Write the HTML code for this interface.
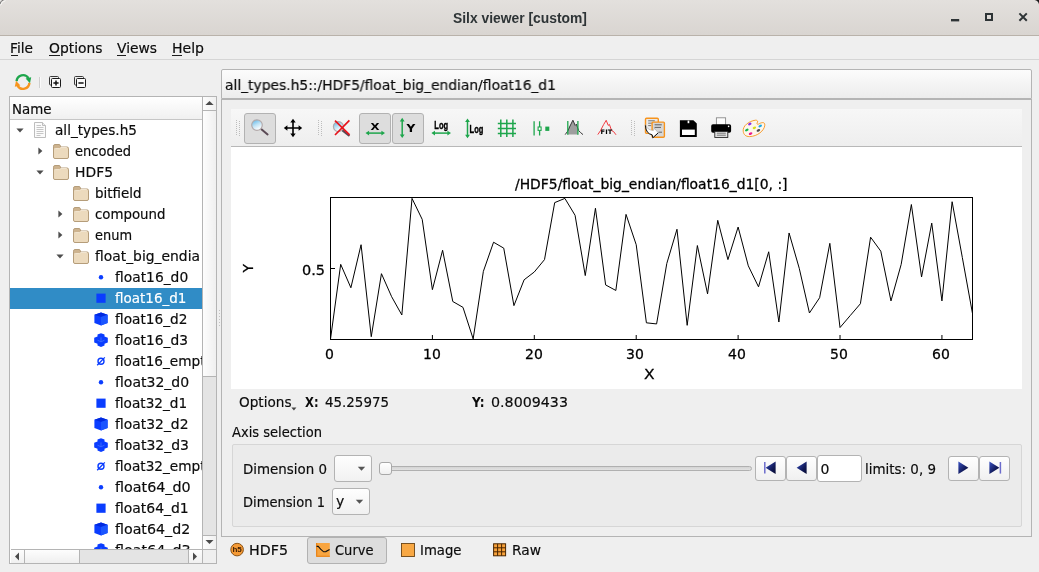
<!DOCTYPE html>
<html lang="en"><head><meta charset="utf-8"><title>Silx viewer [custom]</title>
<style>
html,body{margin:0;padding:0;}
body{width:1039px;height:572px;overflow:hidden;background:#efefef;position:relative;font-family:"DejaVu Sans", "Liberation Sans", sans-serif;font-size:14px;color:#0c0c0c;}
#app{position:absolute;left:0;top:0;width:1039px;height:572px;overflow:hidden;will-change:transform;}
#app div,#app svg{position:absolute;box-sizing:border-box;}
.t{position:absolute;white-space:pre;line-height:20px;transform-origin:0 50%;-webkit-text-stroke:0.18px currentColor;}
</style></head>
<body><div id="app">
<div style="left:0px;top:0px;width:1039px;height:36px;background:linear-gradient(#e3e0dd,#d9d5d1);border-bottom:1px solid #b9b2aa;"></div>
<svg style="left:0;top:0" width="1039" height="8" viewBox="0 0 1039 8"><path d="M1039 0V4.2Q1038.4 0.8 1034.6 0Z" fill="#1a1a1a"/><path d="M0 0H2.4Q0.4 0.4 0 2.6Z" fill="#e9e8e6"/><path d="M0 4Q0.4 0.6 3.6 0" fill="none" stroke="#777" stroke-width="1"/><path d="M0.6 5.4Q1.4 1.6 5.6 0.6" fill="none" stroke="#f6f5f4" stroke-width="1"/></svg>
<span class="t" style="left:453px;top:7.88px;font-size:14.5px;font-weight:bold;-webkit-text-stroke:0;font-family:&quot;Liberation Sans&quot;, &quot;DejaVu Sans&quot;, sans-serif;color:#2e3436;transform:scaleX(0.9556);">Silx viewer [custom]</span>
<svg style="left:945px;top:5px" width="90" height="26" viewBox="945 5 90 26"><g fill="none" stroke="#2e3436" stroke-width="2"><path d="M951 20.2h8.2" stroke-width="2.4"/><rect x="986" y="14" width="6" height="6"/><path d="M1019.4 13.4l7.4 7.4M1026.8 13.4l-7.4 7.4"/></g></svg>
<div style="left:0px;top:59px;width:1039px;height:1px;background:#d5d5d5;"></div>
<span class="t" style="left:10px;top:38.16px;font-size:14px;transform:scaleX(0.9813);">File</span>
<div style="left:10.5px;top:55px;width:7px;height:1px;background:#1c1c1c;"></div>
<span class="t" style="left:48.5px;top:38.16px;font-size:14px;transform:scaleX(0.9902);">Options</span>
<div style="left:49.0px;top:55px;width:11px;height:1px;background:#1c1c1c;"></div>
<span class="t" style="left:116.5px;top:38.16px;font-size:14px;transform:scaleX(0.9869);">Views</span>
<div style="left:117.0px;top:55px;width:9px;height:1px;background:#1c1c1c;"></div>
<span class="t" style="left:171.5px;top:38.16px;font-size:14px;transform:scaleX(1.0024);">Help</span>
<div style="left:172.0px;top:55px;width:10px;height:1px;background:#1c1c1c;"></div>
<svg style="left:14px;top:73px" width="18" height="18" viewBox="0 0 18 18"><path d="M2.6 8.2A6.4 6.4 0 0 1 14.4 5.2" fill="none" stroke="#1ea64c" stroke-width="2.4"/><path d="M11.6 5.6L17.2 4.2L16 10.2Z" fill="#1ea64c"/><path d="M15.4 9.8A6.4 6.4 0 0 1 3.6 12.8" fill="none" stroke="#f7941d" stroke-width="2.4"/><path d="M6.4 12.4L0.8 13.8L2 7.8Z" fill="#f7941d"/></svg>
<div style="left:39px;top:77px;width:1px;height:11px;background:#cfcfcf;"></div>
<div style="left:40px;top:77px;width:1px;height:11px;background:#fafafa;"></div>
<svg style="left:47px;top:74px" width="16" height="16" viewBox="0 0 16 16"><rect x="2.5" y="2.5" width="9" height="8.5" rx="1" fill="none" stroke="#3a3a3a" stroke-width="1"/><rect x="4.5" y="4.5" width="9" height="9" rx="1" fill="#fafafa" stroke="#1a1a1a" stroke-width="1"/><path d="M6.4 9h5.2" stroke="#111" stroke-width="1.5"/><path d="M9 6.4v5.2" stroke="#111" stroke-width="1.5"/></svg>
<svg style="left:72px;top:74px" width="16" height="16" viewBox="0 0 16 16"><rect x="2.5" y="2.5" width="9" height="8.5" rx="1" fill="none" stroke="#3a3a3a" stroke-width="1"/><rect x="4.5" y="4.5" width="9" height="9" rx="1" fill="#fafafa" stroke="#1a1a1a" stroke-width="1"/><path d="M6.4 9h5.2" stroke="#111" stroke-width="1.5"/></svg>
<div style="left:9px;top:96px;width:208px;height:468px;background:#fff;border:1px solid #b4b4b4;"></div>
<div style="left:10px;top:97px;width:193px;height:23px;background:linear-gradient(#ffffff,#f0f0f0);border-bottom:1px solid #c6c6c6;border-right:1px solid #c6c6c6;"></div>
<span class="t" style="left:11.5px;top:99.16px;font-size:14px;transform:scaleX(0.9561);">Name</span>
<div style="left:10px;top:288px;width:192px;height:21px;background:#308cc6;"></div>
<div style="left:11px;top:120px;width:191px;height:429px;overflow:hidden;">
<svg style="left:3.5px;top:5.0px" width="10" height="10" viewBox="-5 -5 10 10"><path d="M-3.6 -1.6h7.2L0 2.4z" fill="#4d4d4d"/></svg>
<svg style="left:22px;top:2px" width="16" height="16" viewBox="0 0 16 16"><path d="M1.5 0.5h8l3 3v12h-11z" fill="#fbfbfb" stroke="#bdbdbd" stroke-width="1"/><path d="M9.5 0.5v3h3" fill="#eee" stroke="#bdbdbd" stroke-width="1"/><path d="M3.5 3.5h4.5M3.5 5.5h7M3.5 7.5h7M3.5 9.5h7M3.5 11.5h7M3.5 13.5h4" stroke="#c6c6c6" stroke-width="1"/></svg>
<span class="t" style="left:43.5px;top:-0.44px;font-size:14px;transform:scaleX(0.9742);">all_types.h5</span>
<svg style="left:23.5px;top:26.0px" width="10" height="10" viewBox="-5 -5 10 10"><path d="M-1.6 -3.6v7.2L2.4 0z" fill="#4d4d4d"/></svg>
<svg style="left:42px;top:24px" width="16" height="16" viewBox="0 0 16 16"><path d="M0.5 2.2 Q0.5 0.5 2 0.5 L6 0.5 Q7 0.5 7.3 1.6 L7.7 3 L14 3 Q15.5 3 15.5 4.5 L15.5 13 Q15.5 14.5 14 14.5 L2 14.5 Q0.5 14.5 0.5 13 Z" fill="#cdb38f" stroke="#b59d7a" stroke-width="1"/><path d="M1 5.8 Q1 4.6 2.4 4.6 L6.6 4.6 L8 3.5 L13.6 3.5 Q15 3.5 15 4.9 L15 12.8 Q15 14 13.6 14 L2.4 14 Q1 14 1 12.8 Z" fill="#ecdabd"/><path d="M1.2 5.1 Q1.4 4.6 2.4 4.6 L6.6 4.6 L8 3.5 L13.8 3.5" stroke="#f7eddc" stroke-width="0.8" fill="none"/></svg>
<span class="t" style="left:63.5px;top:20.56px;font-size:14px;transform:scaleX(0.9312);">encoded</span>
<svg style="left:23.5px;top:47.0px" width="10" height="10" viewBox="-5 -5 10 10"><path d="M-3.6 -1.6h7.2L0 2.4z" fill="#4d4d4d"/></svg>
<svg style="left:42px;top:45px" width="16" height="16" viewBox="0 0 16 16"><path d="M0.5 2.2 Q0.5 0.5 2 0.5 L6 0.5 Q7 0.5 7.3 1.6 L7.7 3 L14 3 Q15.5 3 15.5 4.5 L15.5 13 Q15.5 14.5 14 14.5 L2 14.5 Q0.5 14.5 0.5 13 Z" fill="#cdb38f" stroke="#b59d7a" stroke-width="1"/><path d="M1 5.8 Q1 4.6 2.4 4.6 L6.6 4.6 L8 3.5 L13.6 3.5 Q15 3.5 15 4.9 L15 12.8 Q15 14 13.6 14 L2.4 14 Q1 14 1 12.8 Z" fill="#ecdabd"/><path d="M1.2 5.1 Q1.4 4.6 2.4 4.6 L6.6 4.6 L8 3.5 L13.8 3.5" stroke="#f7eddc" stroke-width="0.8" fill="none"/></svg>
<span class="t" style="left:63.5px;top:41.56px;font-size:14px;transform:scaleX(0.9927);">HDF5</span>
<svg style="left:62px;top:66px" width="16" height="16" viewBox="0 0 16 16"><path d="M0.5 2.2 Q0.5 0.5 2 0.5 L6 0.5 Q7 0.5 7.3 1.6 L7.7 3 L14 3 Q15.5 3 15.5 4.5 L15.5 13 Q15.5 14.5 14 14.5 L2 14.5 Q0.5 14.5 0.5 13 Z" fill="#cdb38f" stroke="#b59d7a" stroke-width="1"/><path d="M1 5.8 Q1 4.6 2.4 4.6 L6.6 4.6 L8 3.5 L13.6 3.5 Q15 3.5 15 4.9 L15 12.8 Q15 14 13.6 14 L2.4 14 Q1 14 1 12.8 Z" fill="#ecdabd"/><path d="M1.2 5.1 Q1.4 4.6 2.4 4.6 L6.6 4.6 L8 3.5 L13.8 3.5" stroke="#f7eddc" stroke-width="0.8" fill="none"/></svg>
<span class="t" style="left:83.5px;top:62.56px;font-size:14px;transform:scaleX(0.9591);">bitfield</span>
<svg style="left:43.5px;top:89.0px" width="10" height="10" viewBox="-5 -5 10 10"><path d="M-1.6 -3.6v7.2L2.4 0z" fill="#4d4d4d"/></svg>
<svg style="left:62px;top:87px" width="16" height="16" viewBox="0 0 16 16"><path d="M0.5 2.2 Q0.5 0.5 2 0.5 L6 0.5 Q7 0.5 7.3 1.6 L7.7 3 L14 3 Q15.5 3 15.5 4.5 L15.5 13 Q15.5 14.5 14 14.5 L2 14.5 Q0.5 14.5 0.5 13 Z" fill="#cdb38f" stroke="#b59d7a" stroke-width="1"/><path d="M1 5.8 Q1 4.6 2.4 4.6 L6.6 4.6 L8 3.5 L13.6 3.5 Q15 3.5 15 4.9 L15 12.8 Q15 14 13.6 14 L2.4 14 Q1 14 1 12.8 Z" fill="#ecdabd"/><path d="M1.2 5.1 Q1.4 4.6 2.4 4.6 L6.6 4.6 L8 3.5 L13.8 3.5" stroke="#f7eddc" stroke-width="0.8" fill="none"/></svg>
<span class="t" style="left:83.5px;top:83.56px;font-size:14px;transform:scaleX(0.9527);">compound</span>
<svg style="left:43.5px;top:110.0px" width="10" height="10" viewBox="-5 -5 10 10"><path d="M-1.6 -3.6v7.2L2.4 0z" fill="#4d4d4d"/></svg>
<svg style="left:62px;top:108px" width="16" height="16" viewBox="0 0 16 16"><path d="M0.5 2.2 Q0.5 0.5 2 0.5 L6 0.5 Q7 0.5 7.3 1.6 L7.7 3 L14 3 Q15.5 3 15.5 4.5 L15.5 13 Q15.5 14.5 14 14.5 L2 14.5 Q0.5 14.5 0.5 13 Z" fill="#cdb38f" stroke="#b59d7a" stroke-width="1"/><path d="M1 5.8 Q1 4.6 2.4 4.6 L6.6 4.6 L8 3.5 L13.6 3.5 Q15 3.5 15 4.9 L15 12.8 Q15 14 13.6 14 L2.4 14 Q1 14 1 12.8 Z" fill="#ecdabd"/><path d="M1.2 5.1 Q1.4 4.6 2.4 4.6 L6.6 4.6 L8 3.5 L13.8 3.5" stroke="#f7eddc" stroke-width="0.8" fill="none"/></svg>
<span class="t" style="left:83.5px;top:104.56px;font-size:14px;transform:scaleX(0.9250);">enum</span>
<svg style="left:43.5px;top:131.0px" width="10" height="10" viewBox="-5 -5 10 10"><path d="M-3.6 -1.6h7.2L0 2.4z" fill="#4d4d4d"/></svg>
<svg style="left:62px;top:129px" width="16" height="16" viewBox="0 0 16 16"><path d="M0.5 2.2 Q0.5 0.5 2 0.5 L6 0.5 Q7 0.5 7.3 1.6 L7.7 3 L14 3 Q15.5 3 15.5 4.5 L15.5 13 Q15.5 14.5 14 14.5 L2 14.5 Q0.5 14.5 0.5 13 Z" fill="#cdb38f" stroke="#b59d7a" stroke-width="1"/><path d="M1 5.8 Q1 4.6 2.4 4.6 L6.6 4.6 L8 3.5 L13.6 3.5 Q15 3.5 15 4.9 L15 12.8 Q15 14 13.6 14 L2.4 14 Q1 14 1 12.8 Z" fill="#ecdabd"/><path d="M1.2 5.1 Q1.4 4.6 2.4 4.6 L6.6 4.6 L8 3.5 L13.8 3.5" stroke="#f7eddc" stroke-width="0.8" fill="none"/></svg>
<span class="t" style="left:83.5px;top:125.56px;font-size:14px;transform:scaleX(0.9909);">float_big_endia</span>
<svg style="left:82px;top:149px" width="16" height="16" viewBox="0 0 16 16"><circle cx="8" cy="8.2" r="2.2" fill="#0a3dff"/></svg>
<span class="t" style="left:103.5px;top:146.56px;font-size:14px;transform:scaleX(0.9884);">float16_d0</span>
<svg style="left:82px;top:170px" width="16" height="16" viewBox="0 0 16 16"><rect x="3.4" y="3.6" width="9.2" height="9.2" fill="#0a3dff"/></svg>
<span class="t" style="left:103.5px;top:167.56px;font-size:14px;color:#fff;transform:scaleX(0.9641);">float16_d1</span>
<svg style="left:82px;top:191px" width="16" height="16" viewBox="0 0 16 16"><path d="M8 1.6L14.6 3.8V12L8 14.6L1.4 12V3.8Z" fill="#0a3dff"/><path d="M8 1.6L14.6 3.8L8 6L1.4 3.8Z" fill="#0029e0"/><path d="M8 6V14.6L14.6 12V3.8Z" fill="#1a55ff"/></svg>
<span class="t" style="left:103.5px;top:188.56px;font-size:14px;transform:scaleX(0.9789);">float16_d2</span>
<svg style="left:82px;top:212px" width="16" height="16" viewBox="0 0 16 16"><path d="M8 1.2L11.5 2.6V4.6L14.8 5.8V10.4L11.5 11.8V13.4L8 14.9L4.5 13.4V11.8L1.2 10.4V5.8L4.5 4.6V2.6Z" fill="#0a3dff"/><path d="M8 5.4v4.4M4.5 8.2L8 9.8l3.5-1.6" stroke="#3a6bff" stroke-width="0.9" fill="none"/></svg>
<span class="t" style="left:103.5px;top:209.56px;font-size:14px;transform:scaleX(0.9857);">float16_d3</span>
<svg style="left:82px;top:233px" width="16" height="16" viewBox="0 0 16 16"><circle cx="8" cy="8.3" r="3" fill="none" stroke="#0a3dff" stroke-width="1.4"/><path d="M4.2 12.2L11.8 4.4" stroke="#0a3dff" stroke-width="1.3"/></svg>
<span class="t" style="left:103.5px;top:230.56px;font-size:14px;transform:scaleX(0.9750);">float16_empt</span>
<svg style="left:82px;top:254px" width="16" height="16" viewBox="0 0 16 16"><circle cx="8" cy="8.2" r="2.2" fill="#0a3dff"/></svg>
<span class="t" style="left:103.5px;top:251.56px;font-size:14px;transform:scaleX(1.0019);">float32_d0</span>
<svg style="left:82px;top:275px" width="16" height="16" viewBox="0 0 16 16"><rect x="3.4" y="3.6" width="9.2" height="9.2" fill="#0a3dff"/></svg>
<span class="t" style="left:103.5px;top:272.56px;font-size:14px;transform:scaleX(0.9749);">float32_d1</span>
<svg style="left:82px;top:296px" width="16" height="16" viewBox="0 0 16 16"><path d="M8 1.6L14.6 3.8V12L8 14.6L1.4 12V3.8Z" fill="#0a3dff"/><path d="M8 1.6L14.6 3.8L8 6L1.4 3.8Z" fill="#0029e0"/><path d="M8 6V14.6L14.6 12V3.8Z" fill="#1a55ff"/></svg>
<span class="t" style="left:103.5px;top:293.56px;font-size:14px;transform:scaleX(0.9924);">float32_d2</span>
<svg style="left:82px;top:317px" width="16" height="16" viewBox="0 0 16 16"><path d="M8 1.2L11.5 2.6V4.6L14.8 5.8V10.4L11.5 11.8V13.4L8 14.9L4.5 13.4V11.8L1.2 10.4V5.8L4.5 4.6V2.6Z" fill="#0a3dff"/><path d="M8 5.4v4.4M4.5 8.2L8 9.8l3.5-1.6" stroke="#3a6bff" stroke-width="0.9" fill="none"/></svg>
<span class="t" style="left:103.5px;top:314.56px;font-size:14px;transform:scaleX(0.9992);">float32_d3</span>
<svg style="left:82px;top:338px" width="16" height="16" viewBox="0 0 16 16"><circle cx="8" cy="8.3" r="3" fill="none" stroke="#0a3dff" stroke-width="1.4"/><path d="M4.2 12.2L11.8 4.4" stroke="#0a3dff" stroke-width="1.3"/></svg>
<span class="t" style="left:103.5px;top:335.56px;font-size:14px;transform:scaleX(0.9750);">float32_empt</span>
<svg style="left:82px;top:359px" width="16" height="16" viewBox="0 0 16 16"><circle cx="8" cy="8.2" r="2.2" fill="#0a3dff"/></svg>
<span class="t" style="left:103.5px;top:356.56px;font-size:14px;transform:scaleX(1.0221);">float64_d0</span>
<svg style="left:82px;top:380px" width="16" height="16" viewBox="0 0 16 16"><rect x="3.4" y="3.6" width="9.2" height="9.2" fill="#0a3dff"/></svg>
<span class="t" style="left:103.5px;top:377.56px;font-size:14px;transform:scaleX(0.9951);">float64_d1</span>
<svg style="left:82px;top:401px" width="16" height="16" viewBox="0 0 16 16"><path d="M8 1.6L14.6 3.8V12L8 14.6L1.4 12V3.8Z" fill="#0a3dff"/><path d="M8 1.6L14.6 3.8L8 6L1.4 3.8Z" fill="#0029e0"/><path d="M8 6V14.6L14.6 12V3.8Z" fill="#1a55ff"/></svg>
<span class="t" style="left:103.5px;top:398.56px;font-size:14px;transform:scaleX(1.0154);">float64_d2</span>
<svg style="left:82px;top:422px" width="16" height="16" viewBox="0 0 16 16"><path d="M8 1.2L11.5 2.6V4.6L14.8 5.8V10.4L11.5 11.8V13.4L8 14.9L4.5 13.4V11.8L1.2 10.4V5.8L4.5 4.6V2.6Z" fill="#0a3dff"/><path d="M8 5.4v4.4M4.5 8.2L8 9.8l3.5-1.6" stroke="#3a6bff" stroke-width="0.9" fill="none"/></svg>
<span class="t" style="left:103.5px;top:419.56px;font-size:14px;transform:scaleX(1.0221);">float64_d3</span>
</div>
<div style="left:202px;top:97px;width:14px;height:452px;background:#d9d9d9;border-left:1px solid #b4b4b4;"></div>
<div style="left:202px;top:97px;width:14px;height:14px;background:linear-gradient(90deg,#fdfdfd,#f0f0f0);border:1px solid #b4b4b4;border-top:none;border-right:none;"></div>
<svg style="left:204.5px;top:100px" width="9" height="6" viewBox="0 0 9 6"><path d="M0.4 4.9L4.5 1L8.6 4.9z" fill="#4a4a4a"/></svg>
<div style="left:202px;top:110px;width:14px;height:267px;background:linear-gradient(90deg,#fdfdfd,#efefef);border:1px solid #b4b4b4;border-right:none;"></div>
<div style="left:202px;top:377px;width:14px;height:158px;background:#e4e4e4;border-left:1px solid #b4b4b4;"></div>
<div style="left:202px;top:535px;width:14px;height:14px;background:linear-gradient(90deg,#fdfdfd,#f0f0f0);border:1px solid #b4b4b4;border-right:none;border-bottom:none;"></div>
<svg style="left:204.5px;top:539px" width="9" height="6" viewBox="0 0 9 6"><path d="M0.5 1L4.5 5L8.5 1z" fill="#4a4a4a"/></svg>
<div style="left:11px;top:549px;width:192px;height:14px;background:#e4e4e4;border-top:1px solid #b4b4b4;"></div>
<div style="left:11px;top:549px;width:14px;height:14px;background:linear-gradient(#fdfdfd,#f0f0f0);border:1px solid #b4b4b4;border-left:none;border-bottom:none;"></div>
<svg style="left:14px;top:552px" width="6" height="9" viewBox="0 0 6 9"><path d="M5 0.5L1 4.5L5 8.5z" fill="#4a4a4a"/></svg>
<div style="left:24px;top:549px;width:56px;height:14px;background:linear-gradient(#fdfdfd,#efefef);border:1px solid #b4b4b4;border-bottom:none;"></div>
<div style="left:188px;top:549px;width:15px;height:14px;background:linear-gradient(#fdfdfd,#f0f0f0);border:1px solid #b4b4b4;border-bottom:none;"></div>
<svg style="left:192px;top:552px" width="6" height="9" viewBox="0 0 6 9"><path d="M1 0.5L5 4.5L1 8.5z" fill="#4a4a4a"/></svg>
<div style="left:202px;top:549px;width:14px;height:14px;background:#efefef;border-left:1px solid #b4b4b4;border-top:1px solid #b4b4b4;"></div>
<div style="left:219px;top:310px;width:1px;height:1px;background:#c2c2c2;"></div>
<div style="left:219px;top:313px;width:1px;height:1px;background:#c2c2c2;"></div>
<div style="left:219px;top:316px;width:1px;height:1px;background:#c2c2c2;"></div>
<div style="left:219px;top:319px;width:1px;height:1px;background:#c2c2c2;"></div>
<div style="left:219px;top:322px;width:1px;height:1px;background:#c2c2c2;"></div>
<div style="left:219px;top:325px;width:1px;height:1px;background:#c2c2c2;"></div>
<div style="left:221px;top:69px;width:811px;height:30px;background:linear-gradient(#fcfcfc,#f4f4f4 50%,#ececec);border:1px solid #b4b4b4;border-radius:2px 2px 0 0;"></div>
<span class="t" style="left:224.5px;top:74.66px;font-size:14px;transform:scaleX(0.9883);">all_types.h5::/HDF5/float_big_endian/float16_d1</span>
<div style="left:221px;top:99px;width:811px;height:438px;border:1px solid #b4b4b4;background:#efefef;"></div>
<div style="left:231px;top:109px;width:791px;height:38px;background:linear-gradient(#f7f7f7,#eeeeee);border-bottom:1px solid #b8b8b8;"></div>
<svg style="left:236px;top:120px" width="5" height="17" viewBox="0 0 5 17" fill="#bdbdbd"><rect x="0" y="0" width="1" height="1"/><rect x="3" y="1" width="1" height="1"/><rect x="0" y="2" width="1" height="1"/><rect x="3" y="3" width="1" height="1"/><rect x="0" y="4" width="1" height="1"/><rect x="3" y="5" width="1" height="1"/><rect x="0" y="6" width="1" height="1"/><rect x="3" y="7" width="1" height="1"/><rect x="0" y="8" width="1" height="1"/><rect x="3" y="9" width="1" height="1"/><rect x="0" y="10" width="1" height="1"/><rect x="3" y="11" width="1" height="1"/><rect x="0" y="12" width="1" height="1"/><rect x="3" y="13" width="1" height="1"/><rect x="0" y="14" width="1" height="1"/><rect x="3" y="15" width="1" height="1"/></svg>
<svg style="left:318px;top:120px" width="5" height="17" viewBox="0 0 5 17" fill="#bdbdbd"><rect x="0" y="0" width="1" height="1"/><rect x="3" y="1" width="1" height="1"/><rect x="0" y="2" width="1" height="1"/><rect x="3" y="3" width="1" height="1"/><rect x="0" y="4" width="1" height="1"/><rect x="3" y="5" width="1" height="1"/><rect x="0" y="6" width="1" height="1"/><rect x="3" y="7" width="1" height="1"/><rect x="0" y="8" width="1" height="1"/><rect x="3" y="9" width="1" height="1"/><rect x="0" y="10" width="1" height="1"/><rect x="3" y="11" width="1" height="1"/><rect x="0" y="12" width="1" height="1"/><rect x="3" y="13" width="1" height="1"/><rect x="0" y="14" width="1" height="1"/><rect x="3" y="15" width="1" height="1"/></svg>
<svg style="left:631px;top:120px" width="5" height="17" viewBox="0 0 5 17" fill="#bdbdbd"><rect x="0" y="0" width="1" height="1"/><rect x="3" y="1" width="1" height="1"/><rect x="0" y="2" width="1" height="1"/><rect x="3" y="3" width="1" height="1"/><rect x="0" y="4" width="1" height="1"/><rect x="3" y="5" width="1" height="1"/><rect x="0" y="6" width="1" height="1"/><rect x="3" y="7" width="1" height="1"/><rect x="0" y="8" width="1" height="1"/><rect x="3" y="9" width="1" height="1"/><rect x="0" y="10" width="1" height="1"/><rect x="3" y="11" width="1" height="1"/><rect x="0" y="12" width="1" height="1"/><rect x="3" y="13" width="1" height="1"/><rect x="0" y="14" width="1" height="1"/><rect x="3" y="15" width="1" height="1"/></svg>
<div style="left:244px;top:113px;width:31.5px;height:31px;background:#dddddd;border:1px solid #b2b2b2;border-radius:3px;"></div>
<div style="left:359px;top:113px;width:31.5px;height:31px;background:#dddddd;border:1px solid #b2b2b2;border-radius:3px;"></div>
<div style="left:392px;top:113px;width:31.5px;height:31px;background:#dddddd;border:1px solid #b2b2b2;border-radius:3px;"></div>
<svg style="left:248px;top:116px" width="24" height="24" viewBox="248 116 24 24"><defs><linearGradient id="lens" x1="0" y1="0" x2="0.5" y2="1"><stop offset="0" stop-color="#4fb0e6"/><stop offset="0.55" stop-color="#bfe2f5"/><stop offset="1" stop-color="#ffffff"/></linearGradient></defs><path d="M261.4 129.2L267.6 134.4" stroke="#5b4a55" stroke-width="2" stroke-linecap="round"/><circle cx="257" cy="125.1" r="5.3" fill="url(#lens)" stroke="#b3aaab" stroke-width="1.2"/></svg>
<svg style="left:283px;top:118px" width="20" height="20" viewBox="-10 -10 20 20"><path d="M-6.5 0H6.5M0 -6.5V6.5" stroke="#000" stroke-width="1.6"/><path d="M0 -9.2L-2.7 -5.6H2.7ZM0 9.2L-2.7 5.6H2.7ZM-9.2 0L-5.6 -2.7V2.7ZM9.2 0L5.6 -2.7V2.7Z" fill="#000"/></svg>
<svg style="left:330px;top:116px" width="24" height="24" viewBox="330 116 24 24"><path d="M342.4 130.4L348.8 135.4" stroke="#5b4a55" stroke-width="2" stroke-linecap="round"/><circle cx="338.4" cy="126.6" r="5" fill="url(#lens)" stroke="#b3aaab" stroke-width="1.2"/><path d="M335 120.6L349.6 134.8M349.4 120.4L335 135" stroke="#e8141c" stroke-width="1.7"/></svg>
<svg style="left:362px;top:116px" width="26" height="24" viewBox="362 116 26 24"><path d="M367.5 133.1H383" stroke="#1ea64c" stroke-width="1.5"/><path d="M365.5 133.1l3.6 -2.4v4.8zM385 133.1l-3.6 -2.4v4.8z" fill="#1ea64c"/><text x="370.6" y="129.9" textLength="9" lengthAdjust="spacingAndGlyphs" style="font-family:&quot;DejaVu Sans&quot;,&quot;Liberation Sans&quot;,sans-serif;font-weight:bold;font-size:9.2px" fill="#000">X</text></svg>
<svg style="left:395px;top:116px" width="26" height="24" viewBox="395 116 26 24"><path d="M402.2 119.8V136" stroke="#1ea64c" stroke-width="1.5"/><path d="M402.2 117.8l-2.4 3.6h4.8zM402.2 138l-2.4 -3.6h4.8z" fill="#1ea64c"/><text x="406.6" y="132" textLength="8.8" lengthAdjust="spacingAndGlyphs" style="font-family:&quot;DejaVu Sans&quot;,&quot;Liberation Sans&quot;,sans-serif;font-weight:bold;font-size:10.6px" fill="#000">Y</text></svg>
<svg style="left:429px;top:116px" width="26" height="24" viewBox="429 116 26 24"><path d="M433.4 133.1H449" stroke="#1ea64c" stroke-width="1.5"/><path d="M431.4 133.1l3.6 -2.4v4.8zM451 133.1l-3.6 -2.4v4.8z" fill="#1ea64c"/><text x="434.3" y="129.3" textLength="13.8" lengthAdjust="spacingAndGlyphs" style="font-family:&quot;Liberation Sans&quot;,&quot;DejaVu Sans&quot;,sans-serif;font-weight:bold;font-size:10.4px" fill="#000" stroke="#000" stroke-width="0.35">Log</text></svg>
<svg style="left:462px;top:116px" width="26" height="24" viewBox="462 116 26 24"><path d="M467.5 120.4V136.3" stroke="#1ea64c" stroke-width="1.5"/><path d="M467.5 118.4l-2.4 3.6h4.8zM467.5 138.3l-2.4 -3.6h4.8z" fill="#1ea64c"/><text x="469.6" y="132.7" textLength="13.8" lengthAdjust="spacingAndGlyphs" style="font-family:&quot;Liberation Sans&quot;,&quot;DejaVu Sans&quot;,sans-serif;font-weight:bold;font-size:10.4px" fill="#000" stroke="#000" stroke-width="0.35">Log</text></svg>
<svg style="left:496px;top:118px" width="22" height="20" viewBox="496 118 22 20"><path d="M500.8 119.5V137M506.8 119.5V137M512.9 119.5V137M497.8 123.5H516M497.8 128.5H516M497.8 133.6H516" stroke="#1ea64c" stroke-width="1.5"/></svg>
<svg style="left:531px;top:118px" width="22" height="20" viewBox="531 118 22 20"><path d="M534.1 121.2V135.6M539.6 121.2V135.6" stroke="#1ea64c" stroke-width="1.3"/><rect x="538.1" y="127" width="3" height="3.4" fill="#fff" stroke="#1ea64c" stroke-width="1.1"/><rect x="545.3" y="126.6" width="4" height="4.3" fill="#1ea64c"/></svg>
<svg style="left:563px;top:118px" width="22" height="20" viewBox="563 118 22 20"><path d="M567.8 134.4L567.8 131 L570 126 L572.9 120.4 L575.2 125.4 L576.4 124.2 L577.9 128.5 L577.9 134.4Z" fill="#9e9e9e"/><path d="M565.2 134.6 L567.8 131 L570 126 L572.9 120.2 L575.2 125.4 L576.4 124.2 L578.6 130.5 L580.6 132.6 L583 134.6" fill="none" stroke="#222" stroke-width="0.9"/><path d="M567.8 121V134.8M577.9 121V134.8" stroke="#1ea64c" stroke-width="1.3"/></svg>
<svg style="left:596px;top:118px" width="22" height="20" viewBox="596 118 22 20"><path d="M597.8 134.6 L600.4 130.8 L603.6 124.6 L606.2 120.3 L608.2 125.4 L609.4 124.4 L611.6 130.6 L613.6 131.6 L616 134.8" fill="none" stroke="#f0262c" stroke-width="0.9"/><text x="600.6" y="134" textLength="11.6" lengthAdjust="spacingAndGlyphs" style="font-family:&quot;DejaVu Sans&quot;,&quot;Liberation Sans&quot;,sans-serif;font-weight:bold;font-size:6.2px" fill="#000">FIT</text></svg>
<svg style="left:643px;top:116px" width="24" height="24" viewBox="643 116 24 24"><rect x="645.5" y="118.2" width="12.8" height="15" rx="1" fill="#e9e9e9" stroke="#f7941d" stroke-width="1.4"/><path d="M648.2 120.8h6.6M648.2 123.2h6.6M648.2 125.6h3" stroke="#666" stroke-width="0.9"/><rect x="652.1" y="122.1" width="12.3" height="15.1" rx="1" fill="#d6d6d6" stroke="#f7941d" stroke-width="1.4"/><path d="M654.6 124.8h7.2M654.6 127.4h6.4M658.6 132.2h3.4" stroke="#555" stroke-width="0.9"/><path d="M645.4 124.5Q646.5 129.8 653.4 130.6L654.6 128.4L658.2 132.9L652.8 137.8L652.2 134.9Q645.6 133.6 645.4 124.5Z" fill="#fff" stroke="#888" stroke-width="0.4"/><path d="M645.4 125.4Q645.7 133.5 652.2 134.9L652.8 137.8L658.2 132.9" fill="none" stroke="#111" stroke-width="1"/></svg>
<svg style="left:678px;top:118px" width="22" height="20" viewBox="678 118 22 20"><path d="M679.9 120.3H693.4L696.8 123.6V136.9H679.9Z" fill="#000"/><rect x="682" y="129.6" width="12.8" height="5.4" fill="#fff"/><rect x="687.6" y="120.6" width="1.7" height="2.6" fill="#fff"/></svg>
<svg style="left:709px;top:116px" width="24" height="24" viewBox="709 116 24 24"><rect x="716.4" y="117.8" width="9.2" height="7.4" fill="#fdfdfd" stroke="#8a8a8a" stroke-width="0.9"/><rect x="711.2" y="124.2" width="19.9" height="8.6" rx="1.8" fill="#000"/><rect x="714.8" y="131.4" width="13" height="6" fill="#e8e8e8" stroke="#222" stroke-width="0.9"/><path d="M716.8 133.2h9M716.8 135.2h9" stroke="#555" stroke-width="0.8"/><circle cx="728.6" cy="126.4" r="0.8" fill="#fff"/></svg>
<svg style="left:741px;top:117px" width="26" height="22" viewBox="741 117 26 22"><path d="M743.2 131.2 C742.6 126 748.6 121.2 755.4 120.2 C757.6 120 758.2 121.6 757.2 122.8 C756.4 124 757.6 124.8 759.2 123.8 C761.8 122.2 765 121.8 764.8 125.2 C764.4 130.6 757.4 136.4 749.6 136.6 C745.4 136.6 743.6 134.4 743.2 131.2Z" fill="#fdf6ec" stroke="#f7941d" stroke-width="0.9"/><ellipse cx="749.8" cy="124" rx="1.8" ry="1.2" fill="#8a2be2" transform="rotate(-25 749.8 124)"/><ellipse cx="760.2" cy="126" rx="1.9" ry="1.2" fill="#19a9e6" transform="rotate(-25 760.2 126)"/><ellipse cx="754.4" cy="127.8" rx="1.8" ry="1.2" fill="#d8e01a" transform="rotate(-25 754.4 127.8)"/><ellipse cx="746.8" cy="130" rx="1.9" ry="1.2" fill="#13b24b" transform="rotate(-25 746.8 130)"/><ellipse cx="758.4" cy="130.4" rx="1.9" ry="1.2" fill="#4a4a4a" transform="rotate(-25 758.4 130.4)"/><ellipse cx="750.6" cy="133.6" rx="1.9" ry="1.2" fill="#ec1c8c" transform="rotate(-25 750.6 133.6)"/></svg>
<div style="left:231px;top:147px;width:791px;height:241.5px;background:#fff;"></div>
<svg style="left:231px;top:148px" width="791" height="240" viewBox="231 148 791 240"><clipPath id="pc"><rect x="330.5" y="198" width="642" height="141.5"/></clipPath><polyline points="330.50,339.10 340.69,264.33 350.88,287.75 361.07,244.73 371.26,336.69 381.45,273.68 391.64,296.69 401.83,314.98 412.02,198.40 422.21,219.41 432.40,289.66 442.60,250.26 452.79,301.51 462.98,307.34 473.17,338.90 483.36,271.37 493.55,242.22 503.74,248.15 513.93,305.64 524.12,279.81 534.31,271.97 544.50,259.61 554.69,202.62 564.88,198.40 575.07,215.29 585.26,275.59 595.45,208.25 605.64,284.93 615.83,290.46 626.02,214.38 636.21,244.73 646.40,322.82 656.60,323.93 666.79,263.53 676.98,229.26 687.17,325.33 697.36,245.54 707.55,293.88 717.74,220.31 727.93,259.61 738.12,227.04 748.31,265.84 758.50,286.84 768.69,251.77 778.88,322.02 789.07,232.97 799.26,268.35 809.45,312.97 819.64,297.70 829.83,243.33 840.02,327.54 850.21,315.58 860.40,303.73 870.60,237.19 880.79,251.16 890.98,300.91 901.17,264.43 911.36,204.53 921.55,276.99 931.74,223.12 941.93,300.91 952.12,201.72 962.31,257.40 972.50,313.57" fill="none" stroke="#000" stroke-width="1" stroke-linejoin="miter" clip-path="url(#pc)"/><rect x="330.5" y="197.5" width="642" height="142" fill="none" stroke="#000" stroke-width="1"/><path d="M432.40 339.5v-4.5M534.31 339.5v-4.5M636.21 339.5v-4.5M738.12 339.5v-4.5M840.02 339.5v-4.5M941.93 339.5v-4.5M330.5 268.5h4.5" stroke="#000" stroke-width="1" fill="none"/></svg>
<span class="t" style="left:514.5px;top:174.46px;font-size:14px;color:#000;transform:scaleX(0.9918);-webkit-text-stroke:0.28px #000;">/HDF5/float_big_endian/float16_d1[0, :]</span>
<span class="t" style="left:302px;top:259.86px;font-size:14px;color:#000;transform:scaleX(1.0330);-webkit-text-stroke:0.28px #000;">0.5</span>
<span class="t" style="left:325.15000000000003px;top:343.86px;font-size:14px;color:#000;transform:scaleX(0.9975);-webkit-text-stroke:0.28px #000;">0</span>
<span class="t" style="left:422.604761904762px;top:343.86px;font-size:14px;color:#000;transform:scaleX(0.9984);-webkit-text-stroke:0.28px #000;">10</span>
<span class="t" style="left:524.5095238095239px;top:343.86px;font-size:14px;color:#000;transform:scaleX(0.9984);-webkit-text-stroke:0.28px #000;">20</span>
<span class="t" style="left:626.4142857142858px;top:343.86px;font-size:14px;color:#000;transform:scaleX(0.9984);-webkit-text-stroke:0.28px #000;">30</span>
<span class="t" style="left:728.3190476190476px;top:343.86px;font-size:14px;color:#000;transform:scaleX(0.9984);-webkit-text-stroke:0.28px #000;">40</span>
<span class="t" style="left:830.2238095238096px;top:343.86px;font-size:14px;color:#000;transform:scaleX(0.9984);-webkit-text-stroke:0.28px #000;">50</span>
<span class="t" style="left:932.1285714285715px;top:343.86px;font-size:14px;color:#000;transform:scaleX(0.9984);-webkit-text-stroke:0.28px #000;">60</span>
<span class="t" style="left:644px;top:363.56px;font-size:14px;color:#000;transform:scaleX(1.1049);-webkit-text-stroke:0.28px #000;">X</span>
<div style="left:238px;top:256.5px;width:20px;height:20px;transform:rotate(-90deg);transform-origin:50% 50%;"><span class="t" style="left:4.5px;top:0px;font-size:14px;-webkit-text-stroke:0.28px #000;color:#000;line-height:20px;">Y</span></div>
<span class="t" style="left:238.5px;top:392.36px;font-size:14px;transform:scaleX(0.9717);">Options</span>
<svg style="left:290px;top:406.4px" width="8" height="6" viewBox="0 0 8 6"><path d="M1.4 1.6h5L3.9 4.4z" fill="#444"/></svg>
<span class="t" style="left:305px;top:392.36px;font-size:14px;font-weight:bold;-webkit-text-stroke:0;transform:scaleX(0.8229);">X:</span>
<span class="t" style="left:325px;top:392.36px;font-size:14px;transform:scaleX(0.9579);">45.25975</span>
<span class="t" style="left:471.5px;top:392.36px;font-size:14px;font-weight:bold;-webkit-text-stroke:0;transform:scaleX(0.8602);">Y:</span>
<span class="t" style="left:491px;top:392.36px;font-size:14px;transform:scaleX(1.0169);">0.8009433</span>
<span class="t" style="left:231.5px;top:422.46px;font-size:14px;transform:scaleX(0.9334);">Axis selection</span>
<div style="left:232px;top:444px;width:790px;height:82.5px;background:#ebebeb;border:1px solid #d6d6d6;border-radius:2px;"></div>
<span class="t" style="left:243px;top:458.76px;font-size:14px;transform:scaleX(0.9569);">Dimension 0</span>
<span class="t" style="left:243px;top:492.16px;font-size:14px;transform:scaleX(0.9341);">Dimension 1</span>
<div style="left:334px;top:455px;width:38px;height:27px;background:linear-gradient(#fefefe,#f1f1f1);border:1px solid #b3b3b3;border-radius:3px;"></div>
<svg style="left:357px;top:466.0px" width="9" height="6" viewBox="0 0 9 6"><path d="M0.8 0.8h7.4L4.5 4.8z" fill="#555"/></svg>
<div style="left:332px;top:488px;width:38px;height:26.5px;background:linear-gradient(#fefefe,#f1f1f1);border:1px solid #b3b3b3;border-radius:3px;"></div>
<svg style="left:355px;top:498.75px" width="9" height="6" viewBox="0 0 9 6"><path d="M0.8 0.8h7.4L4.5 4.8z" fill="#555"/></svg>
<span class="t" style="left:336px;top:490.61px;font-size:14px;">y</span>
<div style="left:379px;top:465.5px;width:373px;height:5.5px;background:linear-gradient(#d4d4d4,#e2e2e2);border:1px solid #b0b0b0;border-radius:2.5px;"></div>
<div style="left:378.5px;top:461.5px;width:13.5px;height:13.5px;background:linear-gradient(#ffffff,#f0f0f0);border:1px solid #a8a8a8;border-radius:3px;"></div>
<div style="left:755px;top:456px;width:30.5px;height:25px;background:linear-gradient(#fefefe,#f0f0f0);border:1px solid #b3b3b3;border-radius:3px;"></div>
<div style="left:786px;top:456px;width:30.5px;height:25px;background:linear-gradient(#fefefe,#f0f0f0);border:1px solid #b3b3b3;border-radius:3px;"></div>
<div style="left:948px;top:456px;width:30.5px;height:25px;background:linear-gradient(#fefefe,#f0f0f0);border:1px solid #b3b3b3;border-radius:3px;"></div>
<div style="left:979px;top:456px;width:30.5px;height:25px;background:linear-gradient(#fefefe,#f0f0f0);border:1px solid #b3b3b3;border-radius:3px;"></div>
<svg style="left:755px;top:456.4px" width="256" height="24" viewBox="755 457 256 24"><defs><linearGradient id="nv" x1="0" y1="0" x2="1" y2="1"><stop offset="0" stop-color="#3a52c4"/><stop offset="0.6" stop-color="#111a5a"/><stop offset="1" stop-color="#060a30"/></linearGradient></defs><path d="M775.6 462.6V475L765.6 468.8Z" fill="url(#nv)"/><path d="M764.8 463V474.6" stroke="#6c6ccc" stroke-width="1.5"/><path d="M806.6 462.6V475L796.6 468.8Z" fill="url(#nv)"/><path d="M958.4 462.6V475L968.4 468.8Z" fill="url(#nv)"/><path d="M989.4 462.6V475L999.4 468.8Z" fill="url(#nv)"/><path d="M1000.4 463V474.6" stroke="#6c6ccc" stroke-width="1.5"/></svg>
<div style="left:817px;top:455px;width:45px;height:27px;background:#fff;border:1px solid #b3b3b3;border-radius:3px;"></div>
<span class="t" style="left:820.5px;top:459.16px;font-size:14px;">0</span>
<span class="t" style="left:865px;top:459.16px;font-size:14px;transform:scaleX(0.9597);">limits: 0, 9</span>
<div style="left:307px;top:537px;width:79.5px;height:27px;background:#dddddd;border:1px solid #b2b2b2;border-radius:3px;"></div>
<svg style="left:229px;top:542px" width="16" height="16" viewBox="0 0 16 16"><circle cx="8.1" cy="7.6" r="6.3" fill="#f59a35" stroke="#8a5418" stroke-width="1"/><text x="3.4" y="9.8" textLength="9.4" lengthAdjust="spacingAndGlyphs" style="font-family:&quot;Liberation Sans&quot;,sans-serif;font-weight:bold;font-size:6.4px" fill="#3a1c00">h5</text></svg>
<span class="t" style="left:249px;top:540.46px;font-size:14px;transform:scaleX(1.0188);">HDF5</span>
<svg style="left:315px;top:542px" width="16" height="16" viewBox="0 0 16 16"><rect x="1.2" y="1" width="13.6" height="13.8" fill="#f9a53f"/><path d="M1.7 1V14.3H14.8" fill="none" stroke="#e77f12" stroke-width="1.1"/><path d="M1.6 4.4L3.2 4.4L5.6 7.2L8.6 9.8L10.8 9.6L14.6 7.6" fill="none" stroke="#111" stroke-width="1.1"/></svg>
<span class="t" style="left:334.6px;top:540.46px;font-size:14px;transform:scaleX(0.9319);">Curve</span>
<svg style="left:400px;top:542px" width="16" height="16" viewBox="0 0 16 16"><rect x="1.5" y="1.5" width="13" height="13" fill="#f8a844" stroke="#6a4414" stroke-width="0.9"/></svg>
<span class="t" style="left:420px;top:540.46px;font-size:14px;transform:scaleX(0.9462);">Image</span>
<svg style="left:492px;top:542px" width="16" height="16" viewBox="0 0 16 16"><rect x="1.6" y="1.8" width="12" height="12" fill="#f8a23a" stroke="#4a2600" stroke-width="1"/><path d="M5.6 1.8v12M9.6 1.8v12M1.6 5.8h12M1.6 9.8h12" stroke="#4a2600" stroke-width="1"/></svg>
<span class="t" style="left:512px;top:540.46px;font-size:14px;transform:scaleX(0.9846);">Raw</span>
</div></body></html>
